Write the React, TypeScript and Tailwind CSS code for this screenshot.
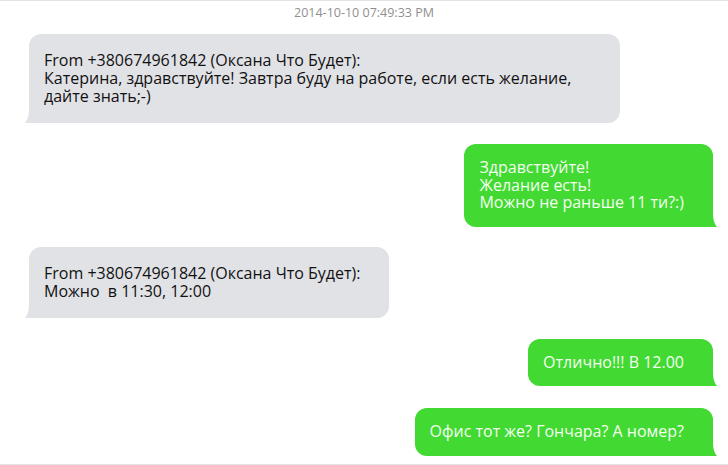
const FONT = "font-['Open_Sans','Noto_Sans',sans-serif]"

const TailLeft = () => (
  <svg className="absolute -left-[4px] bottom-0 w-[16px] h-[14px]" viewBox="0 0 16 14">
    <path d="M4 0 C4 7 2.5 11 0 14 L16 14 L16 0 Z" fill="#e1e2e6" />
  </svg>
)

const TailRight = () => (
  <svg className="absolute -right-[4px] bottom-0 w-[16px] h-[14px]" viewBox="0 0 16 14">
    <path d="M12 0 C12 7 13.5 11 16 14 L0 14 L0 0 Z" fill="#41d932" />
  </svg>
)

const Incoming = ({ lines, className = '' }: { lines: string[]; className?: string }) => (
  <div className={`self-start ml-[14px] relative bg-[#e1e2e6] rounded-[12px] pl-[15px] pr-[29px] pt-[17px] pb-[18px] text-[#111] text-[16px] ${className}`}>
    <p className="leading-[18px] whitespace-pre">
      {lines.map((l, i) => (
        <span key={i}>
          {i > 0 && <br />}
          {l}
        </span>
      ))}
    </p>
    <TailLeft />
  </div>
)

const Outgoing = ({ lines, className = '' }: { lines: string[]; className?: string }) => (
  <div className={`self-end relative bg-[#41d932] rounded-[12px] pl-[15px] pr-[29px] py-[15px] text-[#f4fff0] text-[16px] ${className}`}>
    <p className="leading-[17.5px] whitespace-pre">
      {lines.map((l, i) => (
        <span key={i}>
          {i > 0 && <br />}
          {l}
        </span>
      ))}
    </p>
    <TailRight />
  </div>
)

export default function App() {
  return (
    <div className={`w-[728px] h-[465px] bg-white border-t border-b border-[#e3e3e6] overflow-hidden ${FONT}`}>
      <div className="flex flex-col px-[15px] pt-[4px]">
        <div className="text-center text-[12.5px] leading-[16px] text-[#8f8f8f]">2014-10-10 07:49:33 PM</div>

        <Incoming
          className="mt-[13px] w-[591px]"
          lines={[
            'From +380674961842 (Оксана Что Будет):',
            'Катерина, здравствуйте! Завтра буду на работе, если есть желание,',
            'дайте знать;-)',
          ]}
        />

        <Outgoing
          className="mt-[21px]"
          lines={['Здравствуйте!', 'Желание есть!', 'Можно не раньше 11 ти?:)']}
        />

        <Incoming
          className="mt-[20px]"
          lines={['From +380674961842 (Оксана Что Будет):', 'Можно  в 11:30, 12:00']}
        />

        <Outgoing className="mt-[21px]" lines={['Отлично!!! В 12.00']} />

        <Outgoing className="mt-[22px]" lines={['Офис тот же? Гончара? А номер?']} />
      </div>
    </div>
  )
}
